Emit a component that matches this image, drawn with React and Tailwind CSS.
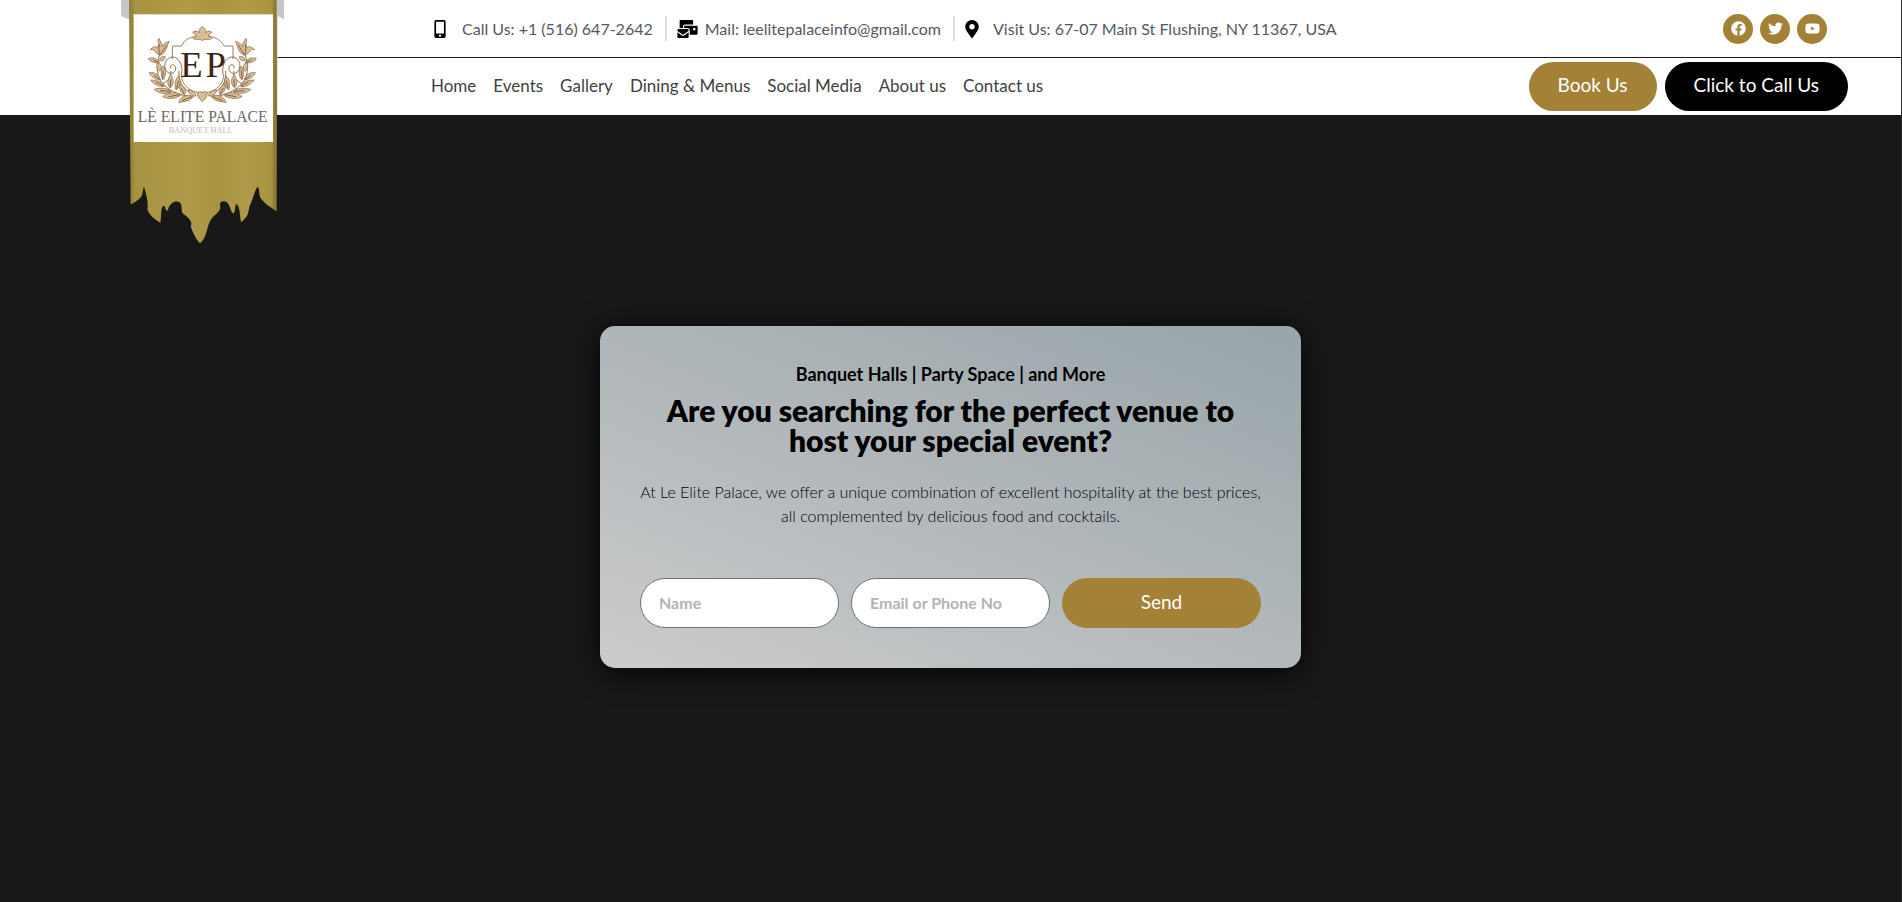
import { useState } from "react";
import {
  FaMobileAlt,
  FaMailBulk,
  FaMapMarkerAlt,
  FaFacebook,
  FaTwitter,
  FaYoutube,
} from "react-icons/fa";

const contacts = [
  { icon: FaMobileAlt, size: "h-[18px] w-3", text: "Call Us: +1 (516) 647-2642", href: "tel:+15166472642" },
  { icon: FaMailBulk, size: "h-[18px] w-[21px]", text: "Mail: leelitepalaceinfo@gmail.com", href: "mailto:leelitepalaceinfo@gmail.com" },
  { icon: FaMapMarkerAlt, size: "h-[18px] w-[14px]", text: "Visit Us: 67-07 Main St Flushing, NY 11367, USA", href: "#map" },
];

const socials = [
  { icon: FaFacebook, label: "Facebook" },
  { icon: FaTwitter, label: "Twitter" },
  { icon: FaYoutube, label: "Youtube" },
];

const links = ["Home", "Events", "Gallery", "Dining & Menus", "Social Media", "About us", "Contact us"];

// One side of the crest, mirrored for the other one
const Branch = () => (
  <g>
    <g fill="none" stroke="#8f7048" strokeWidth="3" strokeLinecap="round">
      <path d="M240 290C205 285 160 268 146 230C138 208 142 180 150 160" />
      <path d="M214 226C222 196 205 166 182 172C164 178 158 202 172 216C184 226 200 216 197 202C194 190 180 192 182 204" />
      <path d="M207 214C205 240 214 262 236 274" />
      <path d="M160 250C180 240 186 225 182 214" />
    </g>
    <g fill="#d9bc94" stroke="#806040" strokeWidth="2" strokeLinejoin="round">
      <path d="M150 166C132 158 130 142 120 150C128 140 138 138 145 142C148 130 140 122 147 115C150 126 158 128 156 140C162 130 168 128 178 124C170 136 172 158 150 166Z" />
      <path d="M147 190C134 188 120 186 115 176C128 170 146 176 147 190Z" />
      <path d="M148 182C150 170 158 168 166 170C166 178 160 184 148 182Z" />
      <path d="M150 214C138 208 138 194 146 186C154 196 158 206 150 214Z" />
      <path d="M150 240C136 238 122 230 118 218C134 216 150 224 150 240Z" />
      <path d="M162 260C142 260 130 252 122 240C142 240 160 246 162 260Z" />
      <path d="M158 240C152 226 152 210 160 198C170 214 168 230 158 240Z" />
      <path d="M184 276C164 284 144 280 132 268C152 262 176 264 184 276Z" />
      <path d="M180 264C170 252 172 238 182 224C194 240 190 256 180 264Z" />
      <path d="M198 270C192 252 196 236 206 228C214 244 210 262 198 270Z" />
      <path d="M214 284C196 298 174 298 158 290C172 278 198 274 214 284Z" />
      <path d="M224 284C208 276 206 264 210 252C224 260 230 272 224 284Z" />
      <path d="M250 290C238 306 218 304 206 308C210 292 228 280 250 290Z" />
      <path d="M258 288C246 290 236 282 234 270C246 270 258 276 258 288Z" />
    </g>
    <path
      d="M150 164C146 154 146 144 148 132M150 164C158 154 164 144 168 136M147 188L130 180M149 238L132 226M160 258L138 246M182 274L150 272M158 236L160 212M181 260L182 238M200 266L205 242M210 284L176 290M222 282L214 264M246 290L216 302"
      fill="none"
      stroke="#806040"
      strokeWidth="3"
    />
  </g>
);

const Banner = () => (
  <svg viewBox="33 0 489 732" className="w-[163px] h-[244px]" role="img" aria-label="Lè Elite Palace Banquet Hall">
    <defs>
      <linearGradient id="cloth" x1="0" y1="0" x2="1" y2="0">
        <stop offset="0" stopColor="#8f7b34" />
        <stop offset="0.04" stopColor="#a89343" />
        <stop offset="0.4" stopColor="#ae9a49" />
        <stop offset="0.6" stopColor="#a99444" />
        <stop offset="0.8" stopColor="#af9b4a" />
        <stop offset="0.96" stopColor="#a89343" />
        <stop offset="1" stopColor="#85712e" />
      </linearGradient>
      <linearGradient id="fold" x1="0" y1="0" x2="0" y2="1">
        <stop offset="0" stopColor="#c4c4c8" />
        <stop offset="1" stopColor="#dcdcde" />
      </linearGradient>
    </defs>
    <path d="M33 0H522V58L503 48V345H60V60L33 48Z" fill="url(#fold)" />
    <path
      d="M57 0H500L501 340L500 634C485 624 462 610 452 594C445 582 450 566 443 560C434 570 431 590 424 606C412 630 420 640 404 656L394 667C388 650 392 624 380 612C374 612 378 632 371 640C362 640 362 618 352 608C342 600 328 604 330 616C334 634 318 640 306 654C288 676 294 712 270 730C256 716 248 694 242 680C250 664 234 652 220 642C210 632 220 616 208 606C194 600 182 610 176 622C174 636 168 636 164 618C150 616 156 640 151 668C136 660 118 646 112 628C116 606 108 580 102 560C96 572 100 584 92 592C84 602 72 608 62 614Z"
      fill="url(#cloth)"
    />
    <path d="M68 0V604M492 0V622" stroke="#8d7932" strokeWidth="2" strokeDasharray="7 5" fill="none" />
    <rect x="71" y="43" width="418" height="383" fill="#fff" />

    {/* frame around the initials */}
    <g fill="none" stroke="#9b8058" strokeWidth="3">
      <path d="M187 178V138H214C222 120 240 110 260 110H294C316 110 332 120 342 138H369V178" />
      <path d="M214 226C216 252 234 274 268 278H290C322 272 338 252 342 226" />
    </g>
    <Branch />
    <g transform="matrix(-1 0 0 1 554 0)">
      <Branch />
    </g>
    <g fill="#d9bc94" stroke="#806040" strokeWidth="2" strokeLinejoin="round">
      <path d="M277 80C286 84 288 92 286 98C294 92 300 92 306 97C300 99 300 106 294 108C302 110 308 112 302 117C290 122 286 114 277 122C268 114 264 122 252 117C246 112 252 110 260 108C254 106 254 99 248 97C254 92 260 92 268 98C266 92 268 84 277 80Z" />
      <path d="M277 304C266 296 260 286 264 278C268 272 275 274 277 279C279 274 286 272 290 278C294 286 288 296 277 304Z" />
    </g>

    <g textAnchor="middle" className="font-['Liberation_Serif',serif]">
      <text x="244" y="230" fontSize="110" fill="#3a2418">
        E
      </text>
      <text x="317" y="230" fontSize="110" fill="#3a2418">
        P
      </text>
      <text x="278" y="366" fontSize="47" fill="#6f6763">
        LÈ ELITE PALACE
      </text>
      <text x="272" y="398" fontSize="25" fill="#c3bbb5">
        BANQUET HALL
      </text>
    </g>
  </svg>
);

const Header = () => (
  <header className="flex bg-white">
    <div className="relative z-10 w-[276px] shrink-0">
      <a href="#home" className="absolute top-0 left-[121px]">
        <Banner />
      </a>
    </div>

    <div className="flex-1">
      {/* Contact bar */}
      <div className="flex h-[58px] items-center justify-between border-b border-[#181818] pl-[158px] pr-[74px]">
        <ul className="flex items-center text-base leading-[25px] text-[#54595f]">
          {contacts.map(({ icon: Icon, size, text, href }) => (
            <li
              key={text}
              className="mr-[10px] border-r-2 border-[#ddd] pr-3 last:mr-0 last:border-r-0 last:pr-0"
            >
              <a href={href} className="flex items-center gap-[6px]">
                <span className="w-[22px]">
                  <Icon className={`text-black ${size}`} />
                </span>
                {text}
              </a>
            </li>
          ))}
        </ul>

        <div className="flex gap-[7px]">
          {socials.map(({ icon: Icon, label }) => (
            <a
              key={label}
              href="#social"
              aria-label={label}
              className="flex h-[30px] w-[30px] items-center justify-center rounded-full bg-[#a38137] text-white"
            >
              <Icon size={15} />
            </a>
          ))}
        </div>
      </div>

      {/* Menu */}
      <div className="flex h-[57px] items-center justify-between pl-[155px] pr-[53px]">
        <nav className="flex gap-[17px] pb-[2px] text-[17px] text-[#3f3f3f]">
          {links.map((link) => (
            <a key={link} href="#menu">
              {link}
            </a>
          ))}
        </nav>
        <div className="flex gap-2 text-[19px] text-white">
          <button className="h-[49px] rounded-full bg-[#a38137] px-[29px] pb-[2px]">Book Us</button>
          <button className="h-[49px] rounded-full bg-black px-[29px] pb-[2px]">Click to Call Us</button>
        </div>
      </div>
    </div>
  </header>
);

const field =
  "h-[50px] min-w-0 rounded-full border border-[#69727d] bg-white px-[18px] pb-[2px] text-base font-bold text-[#333] placeholder:text-[#b3b3b3] outline-none";

const App = () => {
  const [form, setForm] = useState({ name: "", contact: "" });

  const handleChange = (e) => setForm({ ...form, [e.target.name]: e.target.value });

  return (
    <div className="flex min-h-screen flex-col border-r border-[#2b2b2b] bg-[#181818] font-[Lato,sans-serif]">
      <Header />

      <main className="flex flex-1 items-start justify-center px-6 pt-[211px] pb-20">
        <section className="w-full max-w-[701px] rounded-[15px] bg-linear-[22deg] from-[#cccccc] via-[#b1b7ba] to-[#98a5a9] p-10 text-center text-black shadow-[0_4px_30px_rgba(0,0,0,0.8)]">
          <h2 className="text-lg leading-4 font-bold">Banquet Halls | Party Space | and More</h2>
          <h1 className="mt-[13px] text-3xl leading-[30px] font-extrabold">
            Are you searching for the perfect venue to host your special event?
          </h1>
          <p className="mt-[25px] text-base leading-6 font-light">
            At Le Elite Palace, we offer a unique combination of excellent hospitality at the best prices,
            all complemented by delicious food and cocktails.
          </p>

          <form onSubmit={(e) => e.preventDefault()} className="mt-[50px] grid grid-cols-3 gap-3">
            <input
              name="name"
              aria-label="Name"
              placeholder="Name"
              value={form.name}
              onChange={handleChange}
              className={field}
            />
            <input
              name="contact"
              aria-label="Email or Phone No"
              placeholder="Email or Phone No"
              value={form.contact}
              onChange={handleChange}
              className={field}
            />
            <button type="submit" className="h-[50px] rounded-full bg-[#a38137] pb-[2px] text-[19px] text-white">
              Send
            </button>
          </form>
        </section>
      </main>
    </div>
  );
};

export default App;
